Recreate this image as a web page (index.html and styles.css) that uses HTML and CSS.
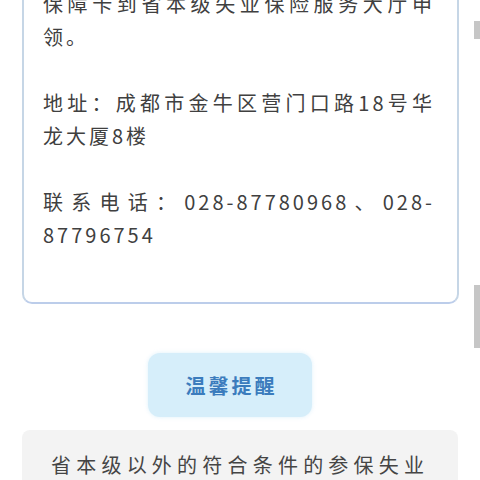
FILE: index.html
```html
<!DOCTYPE html>
<html lang="zh-CN">
<head>
<meta charset="utf-8">
<title>失业保险服务</title>
<link rel="stylesheet" href="styles.css">
</head>
<body>
<div class="page">
  <section class="card">
    <p class="para">保障卡到省本级失业保险服务大厅申领。</p>
    <p class="para">地址：成都市金牛区营门口路18号华龙大厦8楼</p>
    <p class="para">联系电话：028-87780968、028-87796754</p>
  </section>
  <div class="tip-wrap">
    <div class="tip">温馨提醒</div>
  </div>
  <section class="note">
    <p class="note-text">省本级以外的符合条件的参保失业人员，请到参保地失业保险经办机构申领。</p>
  </section>
</div>
<div class="edge edge-top"></div>
<div class="edge edge-bottom"></div>
</body>
</html>
```

FILE: styles.css
```css
html, body {
  margin: 0;
  padding: 0;
  background: #ffffff;
  overflow: hidden;
  height: 480px;
}

body {
  position: relative;
  font-family: "Noto Sans CJK SC", "Noto Sans", sans-serif;
  color: #3c3c3c;
}

.page {
  display: flex;
  flex-direction: column;
}

.card {
  margin: -35.5px 21px 0 22px;
  padding: 20px 22px 51.5px 19px;
  border: 2px solid #c6d6e6;
  border-bottom-color: #bccdea;
  border-radius: 10px;
  background: #ffffff;
}

.para {
  margin: 0 0 33px;
  font-size: 20px;
  line-height: 33px;
  letter-spacing: 3px;
  text-align: justify;
  color: #404040;
}

.para:last-child {
  margin-bottom: 0;
}

.tip-wrap {
  display: flex;
  justify-content: center;
  margin-top: 49px;
  padding-right: 20px;
}

.tip {
  width: 164px;
  height: 64px;
  border-radius: 12px;
  background: #d6eefa;
  box-shadow: 0 0 4px rgba(214, 238, 250, 0.8);
  display: flex;
  align-items: center;
  justify-content: center;
  font-size: 20px;
  font-weight: 700;
  letter-spacing: 3px;
  padding-left: 3px;
  box-sizing: border-box;
  color: #3b7cbd;
}

.note {
  margin: 13px 22px 0 22px;
  padding: 18px 29px 20px 29px;
  background: #f3f3f3;
  border-radius: 8px;
}

.note-text {
  margin: 0;
  font-size: 20px;
  line-height: 33px;
  letter-spacing: 5px;
  text-align: justify;
  color: #454545;
}

.edge {
  position: absolute;
  right: 0;
  width: 6px;
  background: #c6c6c6;
}

.edge-top {
  top: 21px;
  height: 18px;
}

.edge-bottom {
  top: 285px;
  height: 63px;
}
```
